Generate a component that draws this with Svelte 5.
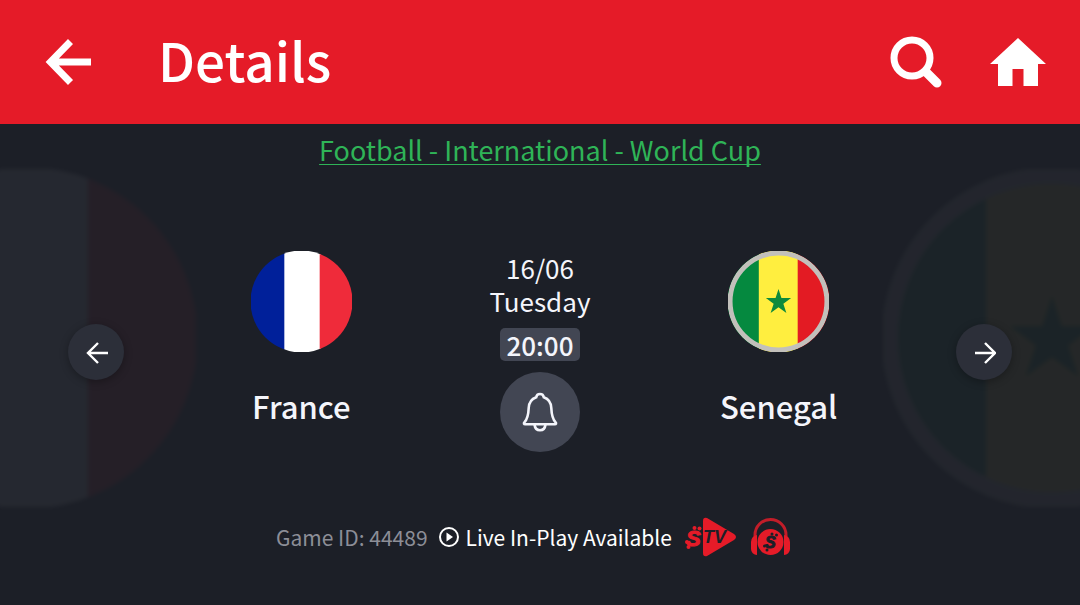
<script lang="ts">
  interface Team {
    name: string;
    flag: "france" | "senegal";
  }

  const home: Team = { name: "France", flag: "france" };
  const away: Team = { name: "Senegal", flag: "senegal" };

  let reminder = $state(false);
</script>

{#snippet flagIcon(flag: string, id: string)}
  <svg viewBox="0 0 100 100" aria-hidden="true">
    <clipPath {id}>
      <circle cx="50" cy="50" r="50.5" />
    </clipPath>
    <g clip-path="url(#{id})">
      {#if flag === "france"}
        <rect width="34" height="100" fill="#00209a" />
        <rect x="33" width="36" height="100" fill="#fff" />
        <rect x="68" width="32" height="100" fill="#ef2b3a" />
      {:else}
        <rect width="31" height="100" fill="#05893f" />
        <rect x="30.5" width="39" height="100" fill="#ffee3f" />
        <rect x="69" width="31" height="100" fill="#e31b23" />
        <path
          d="M50 37.5l2.9 9h9.6l-7.7 5.7 3 9.2-7.8-5.7-7.8 5.7 3-9.2-7.7-5.7h9.6z"
          fill="#0d8a3c"
        />
        <circle cx="50" cy="50" r="48" fill="none" stroke="#c2c0bb" stroke-width="5" />
      {/if}
    </g>
  </svg>
{/snippet}

{#snippet team(t: Team)}
  <div class="team">
    <div class="flag">{@render flagIcon(t.flag, `flag-${t.flag}`)}</div>
    <h2>{t.name}</h2>
  </div>
{/snippet}

<header>
  <button type="button" class="icon-btn" aria-label="Back">
    <svg width="46" height="46" viewBox="0 0 46 46">
      <path d="M25.5 2.5L5.5 23l20 20.5M5 23h41" fill="none" stroke="#fff" stroke-width="7" />
    </svg>
  </button>
  <h1>Details</h1>
  <button type="button" class="icon-btn" aria-label="Search">
    <svg width="52" height="52" viewBox="0 0 52 52" fill="none" stroke="#fff">
      <circle cx="22" cy="22" r="18" stroke-width="7" />
      <path d="M37 37l10 10" stroke-width="9" stroke-linecap="round" />
    </svg>
  </button>
  <button type="button" class="icon-btn" aria-label="Home">
    <svg width="56" height="50" viewBox="0 0 56 50">
      <path d="M28 1l28 26h-8v22H33.5V32h-11v17H8V27H0z" fill="#fff" />
    </svg>
  </button>
</header>

<main>
  <div class="watermark left">{@render flagIcon(home.flag, "mark-home")}</div>
  <div class="watermark right">{@render flagIcon(away.flag, "mark-away")}</div>

  <a href="#league" class="league">Football - International - World Cup</a>

  <section class="match">
    <button type="button" class="nav-btn" aria-label="Previous game">
      <svg width="24" height="24" viewBox="0 0 24 24">
        <path d="M14 3L4 13l10 10M4 13h20" />
      </svg>
    </button>

    <div class="teams">
      {@render team(home)}
      <div class="info">
        <div class="date">
          <div>16/06</div>
          <div>Tuesday</div>
        </div>
        <time>20:00</time>
        <button
          type="button"
          class="bell"
          aria-label="Remind me"
          aria-pressed={reminder}
          onclick={() => (reminder = !reminder)}
        >
          <svg width="36" height="40" viewBox="0 0 36 40">
            <path
              d="M18 2c-2 0-3.500 1.4-3.8 3.2C9.5 6.9 6.9 11 6.7 16c-.3 7-1 11-4.3 14.3-.9 1-.4 2 .7 2h29.8c1.1 0 1.6-1 .7-2C30.3 27 29.6 23 29.3 16c-.2-5-2.8-9.1-7.5-10.8C21.5 3.4 20 2 18 2z"
            />
            <path d="M12.5 32.5c.4 3.5 2.6 5.8 5.5 5.8s5.1-2.3 5.5-5.8" />
          </svg>
        </button>
      </div>
      {@render team(away)}
    </div>

    <button type="button" class="nav-btn" aria-label="Next game">
      <svg width="24" height="24" viewBox="0 0 24 24">
        <path d="M13 3l10 10-10 10M23 13H3" />
      </svg>
    </button>
  </section>

  <footer>
    <span class="game-id">Game ID: 44489</span>
    <span class="live">
      <svg width="20" height="20" viewBox="0 0 20 20" aria-hidden="true">
        <circle cx="10" cy="10" r="9" fill="none" stroke="#fff" stroke-width="2" />
        <path d="M7.5 5.5v9l6.5-4.5z" fill="#fff" />
      </svg>
      Live In-Play Available
    </span>
    <svg class="tv" width="52" height="40" viewBox="0 0 52 40" role="img" aria-label="STV">
      <path d="M18 4Q18 0 22 1L49 17Q53 20 49 23L22 39Q18 40 18 36z" fill="#e51b28" />
      <g fill="#e51b28">
        <text x="1" y="29" font-size="22" stroke="#e51b28" stroke-width="1">S</text>
        <circle cx="9.5" cy="11" r="2" />
        <circle cx="14.5" cy="11.5" r="2" />
        <circle cx="2" cy="25" r="2" />
        <circle cx="3.5" cy="30" r="2" />
      </g>
      <text x="18" y="26" font-size="18" fill="#1c1f27">TV</text>
    </svg>
    <svg class="radio" width="42" height="38" viewBox="0 0 42 38" role="img" aria-label="Audio">
      <path d="M5 20V17a15.5 15.5 0 0 1 31 0v3" fill="none" stroke="#c21d29" stroke-width="3" />
      <path d="M7 17v20a6 6 0 0 1-6-6v-7a7 7 0 0 1 6-7zM34 17v20a6 6 0 0 0 6-6v-7a7 7 0 0 0-6-7z" fill="#e51b28" />
      <circle cx="20.5" cy="24" r="13" fill="#e51b28" />
      <g fill="#1c1f27">
        <text x="15" y="30" font-size="16" stroke="#1c1f27" stroke-width="1">S</text>
        <circle cx="22" cy="16" r="1.5" />
        <circle cx="26.500" cy="17" r="1.5" />
        <circle cx="14.500" cy="28" r="1.5" />
        <circle cx="17" cy="32" r="1.5" />
      </g>
    </svg>
  </footer>
</main>

<style>
  :global(body) {
    margin: 0;
    background: #1c1f27;
    color: #f4f5fb;
    font-family: "Noto Sans CJK SC", "Noto Sans", sans-serif;
  }

  :global(*) {
    box-sizing: border-box;
  }

  button {
    display: grid;
    place-items: center;
    flex: none;
    padding: 0;
    border: none;
    background: none;
    color: inherit;
    cursor: pointer;
  }

  svg {
    display: block;
  }

  header {
    display: flex;
    align-items: center;
    padding: 22px 34px 22px 45px;
    background: #e51b28;
  }

  h1 {
    flex: 1;
    margin: 0;
    padding: 0 0 6px 67px;
    font-size: 53px;
    font-weight: 500;
    line-height: 74px;
    color: #fff;
  }

  .icon-btn + .icon-btn {
    margin-left: 48px;
  }

  main {
    position: relative;
    display: flex;
    flex-direction: column;
    align-items: center;
    overflow: hidden;
    padding: 6px 0 44px;
  }

  .watermark {
    position: absolute;
    top: 45px;
    width: 338px;
    opacity: 0.04;
    filter: blur(2px);
  }

  .watermark.left {
    left: -142px;
  }

  .watermark.right {
    right: -141px;
  }

  .league {
    position: relative;
    font-size: 27px;
    line-height: 40px;
    color: #2fb457;
    text-decoration-thickness: 1px;
    text-decoration-skip-ink: none;
    text-underline-offset: 3px;
  }

  .match {
    position: relative;
    display: flex;
    align-items: center;
    width: 100%;
    padding: 0 68px;
    margin-top: 81px;
  }

  .nav-btn {
    width: 56px;
    height: 56px;
    border-radius: 50%;
    background: #2c2f39;
    box-shadow: 0 2px 8px rgba(0, 0, 0, 0.3);
  }

  .nav-btn path {
    fill: none;
    stroke: #fff;
    stroke-width: 2.4;
  }

  .teams {
    flex: 1;
    display: grid;
    grid-template-columns: repeat(3, 1fr);
    padding: 0 58px;
  }

  .team,
  .info {
    display: flex;
    flex-direction: column;
    align-items: center;
  }

  .flag {
    width: 101px;
  }

  h2 {
    margin: 34px 0 0;
    font-size: 31px;
    font-weight: 500;
    line-height: 40px;
  }

  .info {
    gap: 11px;
  }

  .date {
    font-size: 26px;
    line-height: 33px;
    text-align: center;
  }

  time {
    padding: 0 6px;
    border-radius: 5px;
    background: #424653;
    font-size: 26px;
    font-weight: 500;
    line-height: 33px;
  }

  .bell {
    width: 80px;
    height: 80px;
    border-radius: 50%;
    background: #424653;
  }

  .bell path {
    fill: none;
    stroke: #f4f5fb;
    stroke-width: 2.6;
  }

  footer {
    position: relative;
    display: flex;
    align-items: center;
    margin-top: 65px;
    padding-right: 12px;
    font-size: 21px;
    line-height: 40px;
  }

  .game-id {
    color: #8c8e97;
  }

  .live {
    display: flex;
    align-items: center;
    gap: 7px;
    margin-left: 11px;
    color: #fff;
  }

  .tv,
  .radio {
    margin-left: 13px;
  }

  footer text {
    font-family: "Liberation Sans", Arial, sans-serif;
    font-weight: 700;
    font-style: italic;
  }
</style>
